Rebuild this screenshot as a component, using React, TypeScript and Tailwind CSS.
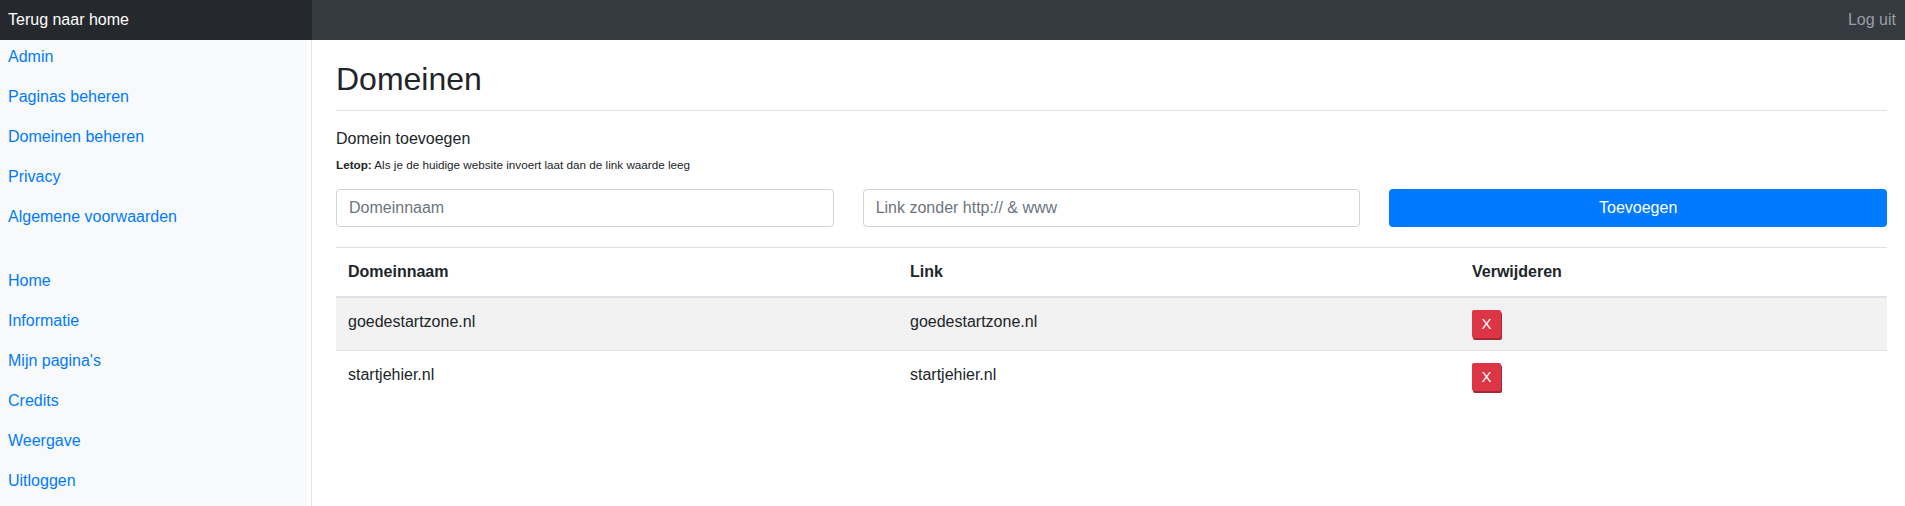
import React from 'react'

const topLinks = ['Admin', 'Paginas beheren', 'Domeinen beheren', 'Privacy', 'Algemene voorwaarden']
const bottomLinks = ['Home', 'Informatie', "Mijn pagina's", 'Credits', 'Weergave', 'Uitloggen']

const domains = [
	{ name: 'goedestartzone.nl', link: 'goedestartzone.nl' },
	{ name: 'startjehier.nl', link: 'startjehier.nl' },
]

function SideLink({ label }: { label: string }) {
	return (
		<a href="#" className="block px-2 pt-[5px] pb-[11px] leading-6 text-[#007bff]">
			{label}
		</a>
	)
}

export default function App() {
	return (
		<div className="flex h-[506px] w-[1905px] flex-col overflow-hidden bg-white font-['Liberation_Sans',Arial,sans-serif] text-base text-[#212529]">
			<nav className="flex h-10 shrink-0 bg-[#343a40]">
				<a href="#" className="flex w-[312px] items-center bg-[#25292d] px-2 text-white">
					Terug naar home
				</a>
				<div className="flex flex-1 items-center justify-end pr-[9px]">
					<a href="#" className="text-[#9a9ea2]">
						Log uit
					</a>
				</div>
			</nav>

			<div className="flex flex-1">
				<aside className="w-[312px] shrink-0 border-r border-[#e2e4e6]">
					<div className="h-full w-[307px] bg-[#f8f9fa]">
						<div>
							{topLinks.map((l) => (
								<SideLink key={l} label={l} />
							))}
						</div>
						<div className="mt-6">
							{bottomLinks.map((l) => (
								<SideLink key={l} label={l} />
							))}
						</div>
					</div>
				</aside>

				<main className="flex-1 pl-6 pr-[18px]">
					<div className="border-b border-[#dee2e6] pt-5 pb-3">
						<h2 className="text-[32px] leading-[38px] font-normal">Domeinen</h2>
					</div>

					<div className="mt-4 leading-6">Domein toevoegen</div>
					<p className="mt-[5px] text-[11.7px] leading-[18px]">
						<b>Letop:</b> Als je de huidige website invoert laat dan de link waarde leeg
					</p>

					<div className="mt-[15px] grid grid-cols-3 gap-[29px]">
						<input
							className="h-[38px] rounded border border-[#ced4da] px-3 text-base placeholder:text-[#6c757d]"
							placeholder="Domeinnaam"
						/>
						<input
							className="h-[38px] rounded border border-[#ced4da] px-3 text-base placeholder:text-[#6c757d]"
							placeholder="Link zonder http:// & www"
						/>
						<button className="h-[38px] rounded bg-[#007bff] text-white">Toevoegen</button>
					</div>

					<table className="mt-5 w-full table-fixed">
						<colgroup>
							<col className="w-[562px]" />
							<col className="w-[562px]" />
							<col />
						</colgroup>
						<thead>
							<tr>
								<th className="border-t border-b-2 border-[#dee2e6] p-3 text-left align-bottom font-bold leading-6">
									Domeinnaam
								</th>
								<th className="border-t border-b-2 border-[#dee2e6] p-3 text-left align-bottom font-bold leading-6">
									Link
								</th>
								<th className="border-t border-b-2 border-[#dee2e6] p-3 text-left align-bottom font-bold leading-6">
									Verwijderen
								</th>
							</tr>
						</thead>
						<tbody>
							{domains.map((d, i) => (
								<tr key={d.name} className={i % 2 === 0 ? 'bg-[#f2f2f2]' : ''}>
									<td className="border-t border-[#dee2e6] p-3 align-top leading-6">{d.name}</td>
									<td className="border-t border-[#dee2e6] p-3 align-top leading-6">{d.link}</td>
									<td className="border-t border-[#dee2e6] p-3 align-top">
										<button className="flex h-[28px] w-[29px] items-center justify-center rounded-[2px] bg-[#dc3545] text-[15px] text-white shadow-[1px_2px_0_#a52834]">
											X
										</button>
									</td>
								</tr>
							))}
						</tbody>
					</table>
				</main>
			</div>
		</div>
	)
}
